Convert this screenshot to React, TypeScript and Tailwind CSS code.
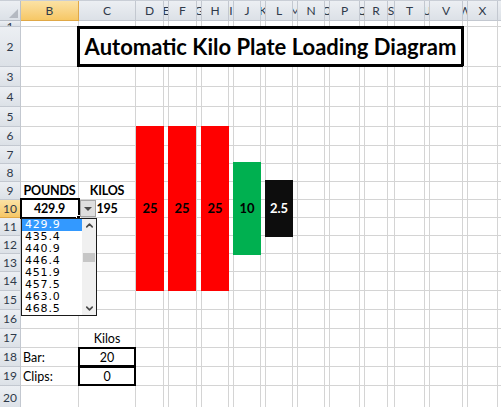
import { ChevronDown, ChevronUp } from 'lucide-react';

interface Column {
    id: string;
    w: string;
}

interface Row {
    n: number;
    h: string;
}

interface CellData {
    text: string;
    bold?: boolean;
    left?: boolean;
    boxed?: boolean;
}


const COLUMNS: Column[] = [
    { id: 'B', w: 'w-[58px]' },
    { id: 'C', w: 'w-[57px]' },
    { id: 'D', w: 'w-[28px]' },
    { id: 'E', w: 'w-[5px]' },
    { id: 'F', w: 'w-[28px]' },
    { id: 'G', w: 'w-[5px]' },
    { id: 'H', w: 'w-[27px]' },
    { id: 'I', w: 'w-[5px]' },
    { id: 'J', w: 'w-[27px]' },
    { id: 'K', w: 'w-[5px]' },
    { id: 'L', w: 'w-[27px]' },
    { id: 'M', w: 'w-[5px]' },
    { id: 'N', w: 'w-[27px]' },
    { id: 'O', w: 'w-[5px]' },
    { id: 'P', w: 'w-[30px]' },
    { id: 'Q', w: 'w-[5px]' },
    { id: 'R', w: 'w-[23px]' },
    { id: 'S', w: 'w-[7px]' },
    { id: 'T', w: 'w-[30px]' },
    { id: 'U', w: 'w-[5px]' },
    { id: 'V', w: 'w-[33px]' },
    { id: 'W', w: 'w-[5px]' },
    { id: 'X', w: 'w-[30px]' },
    { id: 'Y', w: 'w-[30px]' },
];

const ROWS: Row[] = [
    { n: 1, h: 'h-[6px]' },
    { n: 2, h: 'h-[40px]' },
    { n: 3, h: 'h-[20px]' },
    { n: 4, h: 'h-[20px]' },
    { n: 5, h: 'h-[20px]' },
    { n: 6, h: 'h-[19px]' },
    { n: 7, h: 'h-[18px]' },
    { n: 8, h: 'h-[18px]' },
    { n: 9, h: 'h-[18px]' },
    { n: 10, h: 'h-[18px]' },
    { n: 11, h: 'h-[18px]' },
    { n: 12, h: 'h-[18px]' },
    { n: 13, h: 'h-[18px]' },
    { n: 14, h: 'h-[19px]' },
    { n: 15, h: 'h-[19px]' },
    { n: 16, h: 'h-[19px]' },
    { n: 17, h: 'h-[19px]' },
    { n: 18, h: 'h-[19px]' },
    { n: 19, h: 'h-[19px]' },
    { n: 20, h: 'h-[24px]' },
];

const CELLS: Record<string, CellData> = {
    B9: { text: 'POUNDS', bold: true },
    C9: { text: 'KILOS', bold: true },
    B10: { text: '429.9', bold: true },
    C10: { text: '195', bold: true },
    C17: { text: 'Kilos' },
    B18: { text: 'Bar:', left: true },
    C18: { text: '20', boxed: true },
    B19: { text: 'Clips:', left: true },
    C19: { text: '0', boxed: true },
};

// columns C..V are merged on row 2 for the title
const TITLE_SPAN = COLUMNS.slice(1, 21).map((c) => c.id);

const POUND_OPTIONS = ['429.9', '435.4', '440.9', '446.4', '451.9', '457.5', '463.0', '468.5'];

const PLATES = [
    { label: '25', h: 'h-[165px]', bg: 'bg-[#ff0000]', text: 'text-black', ml: '' },
    { label: '25', h: 'h-[165px]', bg: 'bg-[#ff0000]', text: 'text-black', ml: 'ml-[4px]' },
    { label: '25', h: 'h-[165px]', bg: 'bg-[#ff0000]', text: 'text-black', ml: 'ml-[5px]' },
    { label: '10', h: 'h-[93px]', bg: 'bg-[#00b050]', text: 'text-black', ml: 'ml-[4px]' },
    { label: '2.5', h: 'h-[57px]', bg: 'bg-[#0d0d0d]', text: 'text-white', ml: 'ml-[4px]' },
];

const HEADER_BG = 'bg-linear-to-b from-[#eceff3] to-[#dce1e7]';
const SELECTED_BG = 'bg-linear-to-b from-[#fbe2a4] to-[#f6c765]';


const ColumnHeaders = () => (
    <div className="flex h-[21px] border-t border-[#c9ced6]">
        <div className={`relative w-[21px] shrink-0 border-r border-b border-[#b9bfc8] ${HEADER_BG}`}>
            <div className="absolute right-[2px] bottom-[2px] w-0 h-0 border-l-[9px] border-l-transparent border-b-[9px] border-b-[#b4b9c1]" />
        </div>
        {COLUMNS.map((col) => (
            <div
                key={col.id}
                className={`${col.w} shrink-0 flex items-center justify-center overflow-hidden border-r border-b text-[12px] text-[#2f3a4a] ${
                    col.id === 'B' ? `${SELECTED_BG} border-[#e0a846]` : `${HEADER_BG} border-[#c3c8d0]`
                }`}
            >
                <span>{col.id}</span>
            </div>
        ))}
    </div>
);

const RowHeader = ({ row }: { row: Row }) => (
    <div
        className={`w-[21px] shrink-0 flex justify-center overflow-hidden border-r border-b text-[12px] text-[#2f3a4a] ${
            row.n === 1 ? 'items-end' : 'items-center'
        } ${row.n === 10 ? `${SELECTED_BG} border-[#e0a846]` : `${HEADER_BG} border-[#c3c8d0]`}`}
    >
        <span className={row.n === 1 ? 'leading-none translate-y-[7px]' : ''}>{row.n}</span>
    </div>
);

const Cell = ({ col, row }: { col: Column; row: Row }) => {
    const data = CELLS[`${col.id}${row.n}`];

    return (
        <div
            className={`${col.w} shrink-0 relative flex items-end pb-[1px] overflow-visible border-r border-b border-[#d4d4d4] text-[12.5px] text-black ${
                data?.left ? 'justify-start pl-[2px]' : 'justify-center'
            }`}
        >
            {data?.boxed && (
                <div className="absolute -left-px -top-px right-[-1px] bottom-[-1px] border-2 border-black" />
            )}
            {data && (
                <span className={`leading-[15px] whitespace-nowrap ${data.bold ? 'font-bold tracking-[-0.2px]' : ''}`}>
                    {data.text}
                </span>
            )}
        </div>
    );
};

const TitleRow = ({ row }: { row: Row }) => (
    <div className={`flex ${row.h}`}>
        <RowHeader row={row} />
        <Cell col={COLUMNS[0]} row={row} />
        <div className="w-[384px] shrink-0 relative flex items-center justify-center border-r border-b border-[#d4d4d4]">
            <div className="absolute left-[-2px] top-[-1px] right-[-2px] bottom-[-1px] border-[3px] border-black" />
            <span className="text-[22px] font-bold leading-none text-black whitespace-nowrap">
                Automatic Kilo Plate Loading Diagram
            </span>
        </div>
        {COLUMNS.filter((c) => c.id !== 'B' && !TITLE_SPAN.includes(c.id)).map((col) => (
            <Cell key={col.id} col={col} row={row} />
        ))}
    </div>
);

const PlateStack = () => (
    <div className="absolute left-[136px] top-[126px] h-[165px] flex items-center">
        {PLATES.map((plate, index) => (
            <div
                key={index}
                className={`${plate.ml} ${plate.h} ${plate.bg} ${plate.text} w-[28px] flex items-center justify-center text-[13px] font-bold`}
            >
                {plate.label}
            </div>
        ))}
    </div>
);

const DropdownList = () => (
    <div className="absolute left-[21px] top-[218px] w-[76px] h-[98px] flex border border-[#1a1a1a] bg-white font-['DejaVu_Sans',sans-serif]">
        <ul className="w-[60px] text-[11px] tracking-[0.8px] text-black">
            {POUND_OPTIONS.map((option, index) => (
                <li
                    key={option}
                    className={`h-[12px] leading-[12px] pl-[3px] ${index === 0 ? 'bg-[#3399ff] text-white' : ''}`}
                >
                    {option}
                </li>
            ))}
        </ul>
        <div className="w-[14px] flex flex-col items-center bg-[#f0f0f0]">
            <ChevronUp className="w-[11px] h-[11px] mt-[1px] text-[#4a4a4a]" strokeWidth={3.5} />
            <div className="w-[12px] h-[9px] mt-[22px] bg-[#c6c6c6]" />
            <div className="flex-1" />
            <ChevronDown className="w-[11px] h-[11px] mb-[1px] text-[#4a4a4a]" strokeWidth={3.5} />
        </div>
    </div>
);


export default function App() {
    return (
        <div className="relative w-[501px] h-[407px] overflow-hidden bg-white font-['Lato',sans-serif]">
            <ColumnHeaders />
            {ROWS.map((row) =>
                row.n === 2 ? (
                    <TitleRow key={row.n} row={row} />
                ) : (
                    <div key={row.n} className={`flex ${row.h}`}>
                        <RowHeader row={row} />
                        {COLUMNS.map((col) => (
                            <Cell key={col.id} col={col} row={row} />
                        ))}
                    </div>
                )
            )}

            <PlateStack />

            {/* active cell B10 with its validation arrow */}
            <div className="absolute left-[20px] top-[198px] w-[60px] h-[21px] border-2 border-black" />
            <div className="absolute left-[76px] top-[215px] w-[5px] h-[5px] bg-black border border-white" />
            <div className="absolute left-[80px] top-[200px] w-[16px] h-[17px] flex items-center justify-center bg-[#dedede] border border-[#a6a6a6]">
                <div className="w-0 h-0 border-l-[4px] border-r-[4px] border-t-[4px] border-l-transparent border-r-transparent border-t-[#4a4a4a]" />
            </div>
            <DropdownList />
        </div>
    );
}
